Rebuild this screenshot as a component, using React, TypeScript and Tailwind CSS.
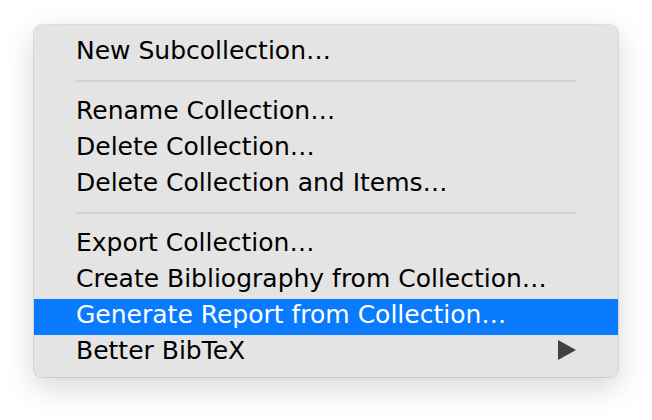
import React from 'react';

type Entry = { label: string; highlighted?: boolean; submenu?: boolean } | 'sep';

const entries: Entry[] = [
  { label: 'New Subcollection…' },
  'sep',
  { label: 'Rename Collection…' },
  { label: 'Delete Collection…' },
  { label: 'Delete Collection and Items…' },
  'sep',
  { label: 'Export Collection…' },
  { label: 'Create Bibliography from Collection…' },
  { label: 'Generate Report from Collection…', highlighted: true },
  { label: 'Better BibTeX', submenu: true },
];

const App = () => {
  return (
    <div className="w-[652px] h-[420px] bg-white pl-[34px] pt-[25px]">
      <div
        className="w-[584px] rounded-[8px] bg-[#e4e4e4] pt-[10px] pb-[6px] shadow-[0_0_0_1px_rgba(0,0,0,0.1),0_10px_30px_rgba(0,0,0,0.17)]"
        style={{ fontFamily: '"DejaVu Sans", "Noto Sans", sans-serif' }}
      >
        {entries.map((entry, i) =>
          entry === 'sep' ? (
            <div key={i} className="h-[24px] px-[42px] pt-[9px]">
              <div className="h-[2px] bg-[#d2d2d2]" />
            </div>
          ) : (
            <div
              key={i}
              className={`flex h-[36px] items-start justify-between px-[42px] text-[25px] leading-[32px] ${
                entry.highlighted ? 'bg-[#0a7bff] text-white' : 'text-black'
              }`}
            >
              <span>{entry.label}</span>
              {entry.submenu && (
                <svg width="18" height="20" viewBox="0 0 18 20" className="mt-[5px]">
                  <path d="M0 0 L18 10 L0 20 Z" fill="#404040" />
                </svg>
              )}
            </div>
          )
        )}
      </div>
    </div>
  );
};

export default App;
